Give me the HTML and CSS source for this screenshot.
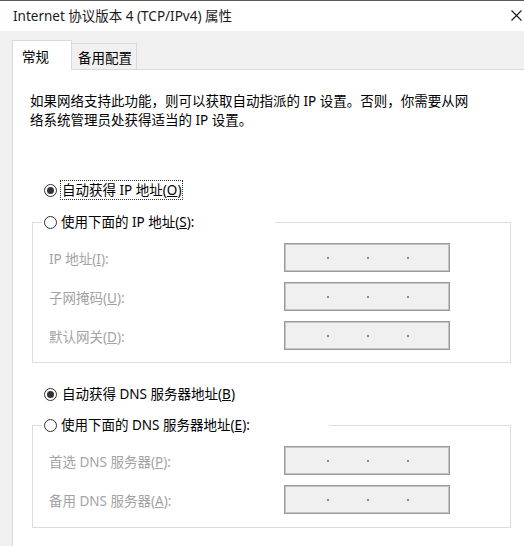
FILE: index.html
```html
<!DOCTYPE html>
<html lang="zh-CN">
<head>
  <meta charset="UTF-8" />
  <title>Internet 协议版本 4 (TCP/IPv4) 属性</title>
  <link rel="stylesheet" href="styles.css">
</head>
<body>
  <div class="titlebar">
    <span class="title">Internet 协议版本 4 (TCP/IPv4) 属性</span>
    <svg class="close" width="11" height="11" viewBox="0 0 11 11">
      <path d="M0.5 0.5 L10.5 10.5 M10.5 0.5 L0.5 10.5" stroke="#1a1a1a" stroke-width="1.1" fill="none" />
    </svg>
  </div>

  <div class="tabbar">
    <div class="tab active">常规</div>
    <div class="tab">备用配置</div>
  </div>

  <div class="panel">
    <p class="intro">如果网络支持此功能，则可以获取自动指派的 IP 设置。否则，你需要从网<br />络系统管理员处获得适当的 IP 设置。</p>

    <div class="option first">
      <span class="radio checked"></span>
      <span class="caption focus">自动获得 IP 地址(<u>O</u>)</span>
    </div>

    <fieldset class="group">
      <legend class="legend-ip">
        <span class="radio"></span>
        <span class="caption">使用下面的 IP 地址(<u>S</u>):</span>
      </legend>
      <div class="fields">
        <label>IP 地址(<u>I</u>):</label>
        <div class="ipbox"><i></i><i></i><i></i></div>
        <label>子网掩码(<u>U</u>):</label>
        <div class="ipbox"><i></i><i></i><i></i></div>
        <label>默认网关(<u>D</u>):</label>
        <div class="ipbox"><i></i><i></i><i></i></div>
      </div>
    </fieldset>

    <div class="option dns">
      <span class="radio checked"></span>
      <span class="caption">自动获得 DNS 服务器地址(<u>B</u>)</span>
    </div>

    <fieldset class="group group-dns">
      <legend class="legend-dns">
        <span class="radio"></span>
        <span class="caption">使用下面的 DNS 服务器地址(<u>E</u>):</span>
      </legend>
      <div class="fields">
        <label>首选 DNS 服务器(<u>P</u>):</label>
        <div class="ipbox"><i></i><i></i><i></i></div>
        <label>备用 DNS 服务器(<u>A</u>):</label>
        <div class="ipbox"><i></i><i></i><i></i></div>
      </div>
    </fieldset>
  </div>
</body>
</html>
```

FILE: styles.css
```css
body {
  margin: 0;
  width: 524px;
  height: 546px;
  overflow: hidden;
  background: #f0f0f0;
  font-family: 'Noto Sans', 'Noto Sans CJK SC', sans-serif;
  font-size: 13.5px;
  color: #000;
}
.titlebar {
  border-top: 1px solid #5a5a5a;
  background: white;
  display: flex;
  align-items: center;
  justify-content: space-between;
  padding: 0 2px 2px 13px;
  box-sizing: border-box;
  height: 31px;
}
.title {
  color: #1a1a1a;
}
.tabbar {
  height: 38px;
  display: flex;
  align-items: flex-end;
  padding-left: 12px;
}
.tab {
  height: 26px;
  width: 65px;
  box-sizing: border-box;
  border-top: 1px solid #d9d9d9;
  border-right: 1px solid #d9d9d9;
  display: flex;
  align-items: center;
  padding-left: 6px;
  background: #f0f0f0;
}
.tab.active {
  width: 60px;
  height: 30px;
  padding-left: 9px;
  margin-bottom: -1px;
  border-left: 1px solid #d9d9d9;
  background: white;
  position: relative;
  z-index: 1;
}
.panel {
  margin-left: 12px;
  height: 477px;
  box-sizing: border-box;
  border-left: 1px solid #d9d9d9;
  border-top: 1px solid #d9d9d9;
  background: white;
  padding: 22px 13px 0 17px;
}
.intro {
  margin: 0;
  line-height: 19px;
}
.option {
  display: flex;
  align-items: center;
  height: 20px;
  margin-left: 14px;
}
.option.first {
  margin-top: 50px;
}
.option.dns {
  margin-top: 21px;
}
.radio {
  width: 13px;
  height: 13px;
  box-sizing: border-box;
  border: 1px solid #333;
  border-radius: 50%;
  background: white;
  display: flex;
  align-items: center;
  justify-content: center;
  flex-shrink: 0;
}
.radio.checked::after {
  content: '';
  width: 7px;
  height: 7px;
  border-radius: 50%;
  background: #333;
}
.caption {
  margin-left: 3px;
  padding: 0 1px;
  line-height: 18px;
  border: 1px dotted transparent;
  white-space: nowrap;
}
.caption.focus {
  border-color: #333;
}
.group {
  margin: 12px 0 0 2px;
  padding: 11px 0 12px 9px;
  border: 1px solid #dcdcdc;
  min-width: 0;
}
.group-dns {
  margin-top: 11px;
  padding-bottom: 13px;
}
legend {
  padding: 0 0 0 2px;
  height: 20px;
  display: flex;
  align-items: center;
  box-sizing: border-box;
}
.legend-ip {
  width: 233px;
}
.legend-dns {
  width: 287px;
}
legend .caption {
  margin-left: 2px;
}
.fields {
  display: grid;
  grid-template-columns: 235px 166px;
  row-gap: 10px;
  margin-left: 7px;
  align-items: center;
}
.fields label {
  color: #a3a3a3;
  white-space: nowrap;
}
.ipbox {
  height: 29px;
  box-sizing: border-box;
  border: 1px solid #9a9a9a;
  box-shadow: inset 0 0 0 1px #c4c4c4;
  background: #f0f0f0;
  display: flex;
  align-items: center;
  gap: 38px;
  padding-left: 42px;
}
.ipbox i {
  width: 2px;
  height: 2px;
  background: #8a8a8a;
}
```
